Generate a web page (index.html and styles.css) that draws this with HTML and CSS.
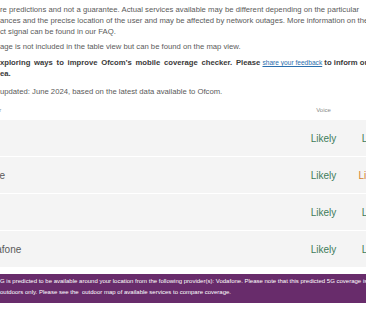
FILE: index.html
```html
<!DOCTYPE html>
<html lang="en">
<head>
  <meta charset="UTF-8" />
  <title>Mobile coverage results</title>
  <link rel="stylesheet" href="styles.css">
</head>
<body>
<div class="page">

  <!-- Notes above the results table -->
  <div class="notes">
    <p class="note-first">
      <span class="line-full">re predictions and not a guarantee. Actual services available may be different depending on the particular</span>
      <span class="line-full">ances and the precise location of the user and may be affected by network outages. More information on the</span>
      <span class="line-end">ct signal can be found in our FAQ.</span>
    </p>
    <p class="note-second">age is not included in the table view but can be found on the map view.</p>
    <p class="note-strong"><span class="wide">xploring ways to improve Ofcom’s mobile coverage checker. Please</span> <a href="#">share your feedback</a> to inform our<br>ea.</p>
    <p class="note-updated">updated: June 2024, based on the latest data available to Ofcom.</p>
  </div>

  <!-- Results table -->
  <div class="results">
    <div class="results-head">
      <span class="provider">Provider</span>
      <span class="cell">Voice</span>
      <span class="cell">Data</span>
    </div>
    <div class="results-row">
      <span class="provider">EE</span>
      <span class="cell likely">Likely</span>
      <span class="cell likely">Likely</span>
    </div>
    <div class="results-row">
      <span class="provider">Three</span>
      <span class="cell likely">Likely</span>
      <span class="cell limited">Limited</span>
    </div>
    <div class="results-row">
      <span class="provider">O2</span>
      <span class="cell likely">Likely</span>
      <span class="cell likely">Likely</span>
    </div>
    <div class="results-row">
      <span class="provider">Vodafone</span>
      <span class="cell likely">Likely</span>
      <span class="cell likely">Likely</span>
    </div>
  </div>

  <!-- 5G notice -->
  <div class="banner">
    G is predicted to be available around your location from the following provider(s): Vodafone. Please note that this predicted 5G coverage is<br>outdoors only. Please see the &nbsp;outdoor map of available services to compare coverage.
  </div>

</div>
</body>
</html>
```
FILE: styles.css
```css
html, body {
  margin: 0;
  padding: 0;
  background: #fff;
  font-family: "Liberation Sans", Arial, sans-serif;
  color: #5a5a5a;
  overflow: hidden;
}

.page {
  width: 366px;
  height: 311px;
  overflow: hidden;
}

/* Notes */
.notes {
  padding-top: 4px;
  font-size: 7.7px;
  line-height: 11px;
  white-space: nowrap;
}
.notes p {
  margin: 0;
}
.line-full,
.line-end {
  display: block;
}
/* paragraph text is justified in the source page */
.line-full {
  width: 359px;
  text-align: justify;
  text-align-last: justify;
}
.note-first   { margin-bottom: 4px !important; }
.note-second  { margin-bottom: 5px !important; }
.note-strong  {
  margin-bottom: 7px !important;
  font-weight: bold;
  color: #3a3a3a;
}
.note-strong .wide {
  word-spacing: 1.6px;
}
.note-strong a {
  color: #2a6ead;
  font-weight: normal;
  font-size: 6.6px;
  text-decoration: underline;
}

/* Results table */
.results {
  margin-left: -21px;
  margin-top: 4px;
  display: flex;
  flex-direction: column;
  gap: 1px;
}
.results-head,
.results-row {
  display: grid;
  grid-template-columns: 319px 51px 51px 51px;
  align-items: center;
  white-space: nowrap;
}
.results-head {
  height: 18px;
  font-size: 6px;
  color: #8a8a8a;
}
.results-row {
  height: 36px;
  background: #f4f4f4;
  font-size: 10px;
}
.cell {
  text-align: center;
}
.likely  { color: #3e7c5a; }
.limited { color: #d4822e; }

/* 5G notice */
.banner {
  margin-top: 7px;
  padding: 2px 0 5px;
  background: #682c6b;
  color: #fff;
  font-size: 6px;
  line-height: 11px;
  white-space: nowrap;
}
```
